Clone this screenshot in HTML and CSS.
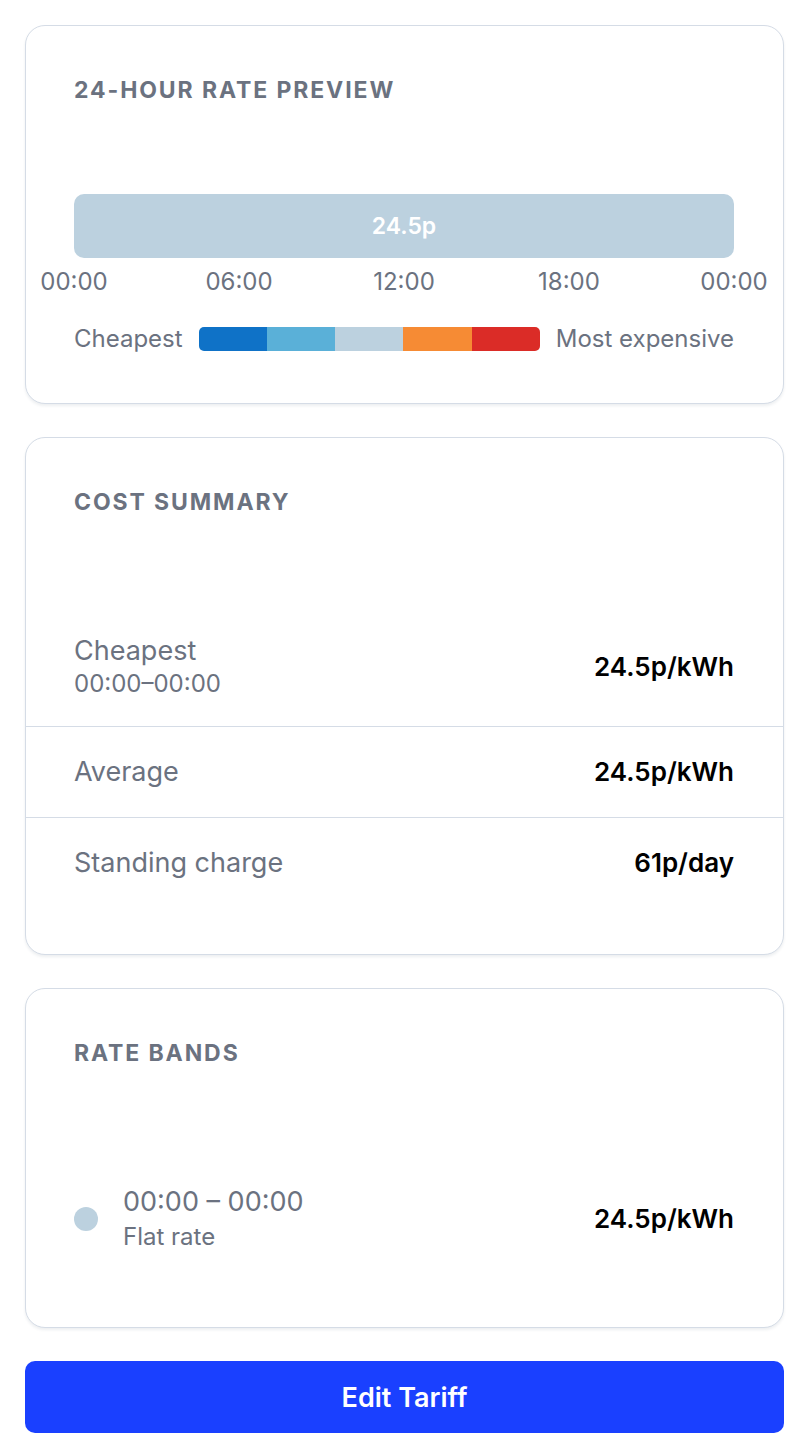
FILE: index.html
```html
<!DOCTYPE html>
<html lang="en">
<head>
  <meta charset="utf-8" />
  <title>Tariff</title>
  <link rel="stylesheet" href="styles.css">
</head>
<body>

<div class="page">

  <section class="card card-preview">
    <h2 class="card-title">24-Hour Rate Preview</h2>

    <div class="rate-bar"><span>24.5p</span></div>

    <div class="ticks">
      <span>00:00</span>
      <span>06:00</span>
      <span>12:00</span>
      <span>18:00</span>
      <span>00:00</span>
    </div>

    <div class="legend">
      <span>Cheapest</span>
      <div class="scale">
        <i class="c1"></i><i class="c2"></i><i class="c3"></i><i class="c4"></i><i class="c5"></i>
      </div>
      <span>Most expensive</span>
    </div>
  </section>

  <section class="card card-list">
    <h2 class="card-title">Cost Summary</h2>

    <ul class="rows">
      <li>
        <div>
          <div class="label">Cheapest</div>
          <div class="sub">00:00–00:00</div>
        </div>
        <div class="value">24.5p/kWh</div>
      </li>
      <li>
        <div class="label">Average</div>
        <div class="value">24.5p/kWh</div>
      </li>
      <li>
        <div class="label">Standing charge</div>
        <div class="value">61p/day</div>
      </li>
    </ul>
  </section>

  <section class="card card-list">
    <h2 class="card-title">Rate Bands</h2>

    <ul class="rows">
      <li class="band-row">
        <div class="band">
          <span class="dot"></span>
          <div>
            <div class="label">00:00 – 00:00</div>
            <div class="sub">Flat rate</div>
          </div>
        </div>
        <div class="value">24.5p/kWh</div>
      </li>
    </ul>
  </section>

  <button class="edit-btn">Edit Tariff</button>

</div>

</body>
</html>
```

FILE: styles.css
```css
body {
  margin: 0;
  background: #fff;
  font-family: Inter, "Liberation Sans", sans-serif;
  color: #000;
}

.page {
  display: flex;
  flex-direction: column;
  gap: 33px;
  padding: 25px 24px 0 25px;
}

.card {
  border: 1px solid #d5dce6;
  border-radius: 20px;
  background: #fff;
  box-shadow: 0 2px 3px rgba(30, 50, 80, 0.08);
}

.card-preview {
  padding: 50px 49px 49px 48px;
}

.card-list {
  padding: 50px 0 46px 0;
}

.card-title {
  margin: 0 0 90px 0;
  font-size: 23px;
  line-height: 28px;
  font-weight: 700;
  letter-spacing: 1.9px;
  text-transform: uppercase;
  color: #6b7280;
}

.card-list .card-title {
  margin: 0 49px 91px 48px;
}

/* rate bar */

.rate-bar {
  height: 64px;
  border-radius: 10px;
  background: #bcd1df;
  display: flex;
  align-items: center;
  justify-content: center;
  color: #fff;
  font-size: 23px;
  font-weight: 600;
}

.ticks {
  display: flex;
  justify-content: space-between;
  margin: 9px -45px 0 -45px;
  font-size: 24px;
  line-height: 30px;
  color: #6b7280;
}

.ticks span {
  width: 90px;
  text-align: center;
}

.legend {
  display: flex;
  align-items: center;
  gap: 16px;
  margin-top: 27px;
  font-size: 24px;
  line-height: 30px;
  color: #6b7280;
}

.scale {
  flex: 1;
  display: flex;
  height: 24px;
  border-radius: 5px;
  overflow: hidden;
}

.scale i {
  flex: 1;
}

.scale .c1 { background: #0f72c7; }
.scale .c2 { background: #5ab0d8; }
.scale .c3 { background: #bcd1df; }
.scale .c4 { background: #f68b34; }
.scale .c5 { background: #db2c27; }

/* rows */

.rows {
  list-style: none;
  margin: 0;
  padding: 0;
}

.rows li {
  display: flex;
  align-items: center;
  justify-content: space-between;
  padding: 29px 49px 29px 48px;
  border-top: 1px solid #d5dce6;
}

.rows li:first-child {
  border-top: 0;
}

.rows li.band-row {
  padding-bottom: 31px;
}

.label {
  font-size: 27px;
  line-height: 30px;
  color: #6b7280;
}

.sub {
  margin-top: 5px;
  font-size: 24px;
  line-height: 26px;
  color: #6b7280;
}

.value {
  font-size: 26px;
  line-height: 32px;
  font-weight: 600;
  color: #000;
}

.band {
  display: flex;
  align-items: center;
  gap: 25px;
}

.band .sub {
  margin-top: 7px;
}

.dot {
  width: 24px;
  height: 24px;
  border-radius: 50%;
  background: #bcd1df;
}

.edit-btn {
  height: 72px;
  border: 0;
  border-radius: 10px;
  background: #1a40ff;
  color: #fff;
  font-family: inherit;
  font-size: 27px;
  font-weight: 600;
  cursor: pointer;
}
```
